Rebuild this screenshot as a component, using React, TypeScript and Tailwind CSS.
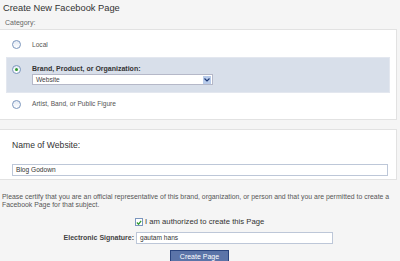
import React from "react";

function Radio({ checked }: { checked?: boolean }) {
  return (
    <span className="flex h-[9px] w-[9px] shrink-0 items-center justify-center rounded-full border border-[#7b96bd] bg-gradient-to-b from-[#e3eaf4] to-white">
      {checked && <span className="h-[3px] w-[3px] rounded-full bg-[#2f9a2f]" />}
    </span>
  );
}

export default function App() {
  return (
    <div
      className="h-[261px] w-[400px] overflow-hidden bg-[#f5f5f5] text-[#333]"
      style={{ fontFamily: '"Liberation Sans", Arial, sans-serif' }}
    >
      <h1 className="pl-[3px] pt-[1px] text-[9.3px] leading-[14px] text-[#333]">
        Create New Facebook Page
      </h1>
      <p className="mt-[3px] pl-[5px] text-[7px] leading-[10px] text-[#666]">Category:</p>

      {/* category panel */}
      <div className="mt-[1px] w-[397px] border-y border-r border-[#e2e2e2] bg-white pb-[4px] pt-[2px]">
        <div className="mx-[6px] flex h-[25px] items-center gap-[11px] pl-[6px]">
          <Radio />
          <span className="text-[6.6px] text-[#555]">Local</span>
        </div>
        <div className="mx-[6px] flex h-[36px] items-start gap-[11px] border border-[#e3e7ef] bg-[#d8dfea] pl-[5px] pt-[7px]">
          <Radio checked />
          <div className="-mt-[1px] flex flex-col gap-[1px]">
            <span className="text-[7px] font-bold leading-[9px] text-[#333]">
              Brand, Product, or Organization:
            </span>
            <div className="flex h-[11px] w-[181px] items-center justify-between border border-[#b5b8c8] bg-white pl-[3px] pr-[1px]">
              <span className="text-[6.6px] text-[#444]">Website</span>
              <span className="flex h-[8px] w-[8px] items-center justify-center bg-[#b8cbea]">
                <svg width="6" height="4" viewBox="0 0 6 4">
                  <path d="M0.5 0.5 L3 3 L5.5 0.5" stroke="#1e3a78" strokeWidth="1.2" fill="none" />
                </svg>
              </span>
            </div>
          </div>
        </div>
        <div className="mx-[6px] flex h-[22px] items-center gap-[11px] pl-[6px]">
          <Radio />
          <span className="text-[6.6px] text-[#555]">Artist, Band, or Public Figure</span>
        </div>
      </div>

      {/* name panel */}
      <div className="mt-[9px] h-[51px] w-[397px] border-y border-r border-[#e2e2e2] bg-white px-[12px] pt-[10px]">
        <p className="text-[8.6px] leading-[11px] text-[#333]">Name of Website:</p>
        <div className="mt-[13px] flex h-[12px] w-[376px] items-center border border-[#bdc7d8] bg-white pl-[3px]">
          <span className="text-[6.6px] text-[#333]">Blog Godown</span>
        </div>
      </div>

      <p className="mt-[13px] pl-[2px] text-[6.9px] leading-[8px] text-[#555]">
        Please certify that you are an official representative of this brand, organization, or person and that you are permitted to create a Facebook Page for that subject.
      </p>

      <div className="mt-[8px] flex h-[10px] items-center pl-[135px]">
        <span className="flex h-[8px] w-[8px] items-center justify-center border border-[#7b96bd] bg-white">
          <svg width="7" height="7" viewBox="0 0 7 7">
            <path d="M1 3.5 L3 5.5 L6 1.5" stroke="#2f9a2f" strokeWidth="1.4" fill="none" />
          </svg>
        </span>
        <span className="ml-[2px] text-[7.7px] font-medium text-[#333]">
          I am authorized to create this Page
        </span>
      </div>

      <div className="mt-[5px] flex items-center">
        <span className="w-[136px] pr-[2px] text-right text-[7px] font-bold text-[#444]">
          Electronic Signature:
        </span>
        <div className="flex h-[12px] w-[197px] items-center border border-[#bdc7d8] bg-white pl-[3px]">
          <span className="text-[6.6px] text-[#333]">gautam hans</span>
        </div>
      </div>

      <div className="mt-[6px] pl-[170px]">
        <button className="flex h-[15px] w-[59px] items-center justify-center border border-[#29447e] bg-[#5b74a8] text-[7px] text-white">
          Create Page
        </button>
      </div>
    </div>
  );
}
